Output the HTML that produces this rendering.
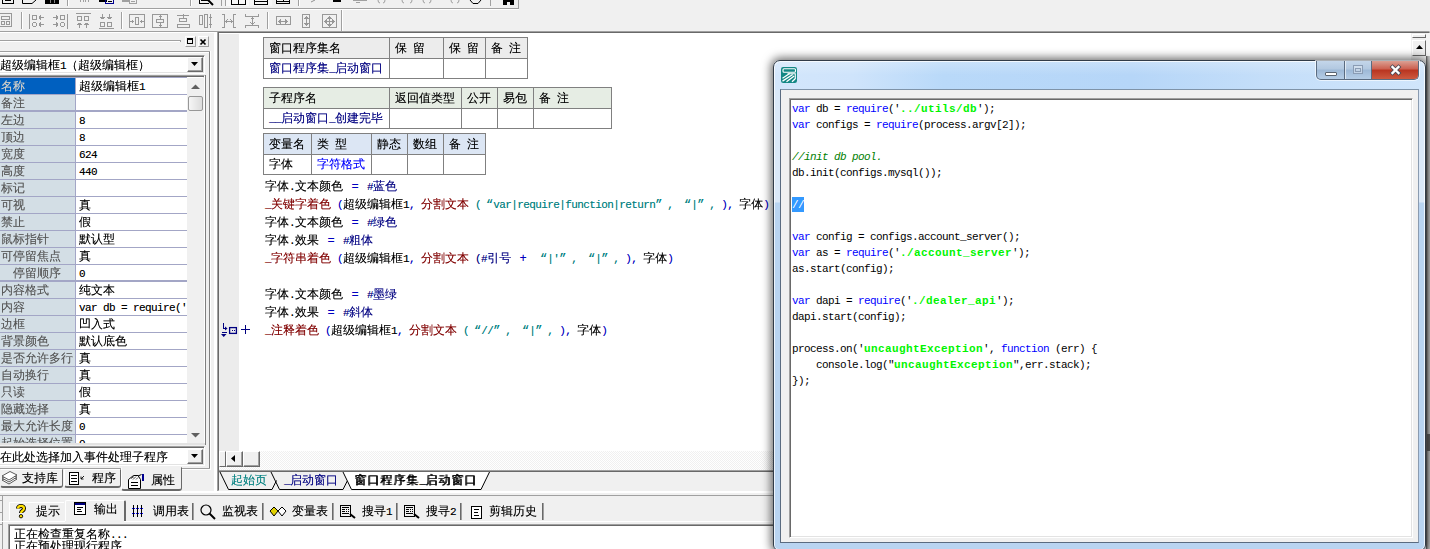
<!DOCTYPE html>
<html><head><meta charset="utf-8"><title>IDE</title><style>
html,body{margin:0;padding:0}
body{width:1430px;height:549px;overflow:hidden;background:#f0f0f0;position:relative;
 font-family:"Liberation Mono","WenQuanYi Zen Hei","Noto Sans CJK SC",sans-serif;font-size:12px;color:#000}
div{position:absolute;box-sizing:border-box}
.t{white-space:pre;line-height:12px;height:12px;margin-top:1px;margin-left:1px;text-shadow:0 0 0 color-mix(in srgb,currentColor 45%,transparent)}
.a{font-family:"Liberation Mono","WenQuanYi Zen Hei",monospace;font-size:11px;letter-spacing:-0.601px}
.ql{display:inline-block;width:12px;text-align:right}
.qr{display:inline-block;width:12px;text-align:left}
.fw{display:inline-block;width:12px;text-align:center}
.c{white-space:pre;line-height:16px;height:16px;font-family:"Liberation Mono","WenQuanYi Zen Hei",monospace;font-size:11px;letter-spacing:-0.601px}
.c b{letter-spacing:0.399px;color:#00f400}
.k{color:#0000ff}
.cm{color:#008000;font-style:italic}
svg{position:absolute;overflow:visible}
</style></head><body>
<div style="left:0px;top:8px;width:519px;height:1px;background:#a0a0a0"></div>
<div style="left:0px;top:9px;width:519px;height:1px;background:#fff"></div>
<div style="left:518px;top:0px;width:1px;height:9px;background:#a0a0a0"></div>
<div style="left:226px;top:0px;width:23px;height:6px;background:#f8f8f8"></div>
<div style="left:250px;top:0px;width:22px;height:6px;background:#f6f6f6"></div>
<svg style="left:0;top:0" width="520" height="8" viewBox="0 0 520 8" fill="none" stroke="#000" stroke-width="1" shape-rendering="crispEdges"><path d="M2.5 0V3.5H13.5V0M5 0.5H11"/><path d="M22.5 0V3.5H32L36 0" shape-rendering="auto"/><rect x="45" y="0" width="14" height="4" fill="#000" stroke="none"/><path d="M50.5 0V3M54.5 0V3" stroke="#808080"/><path d="M80.5 0V2M83.5 0V2M85.5 0V2M88.5 0V2" stroke="#a0a0a0"/><rect x="99" y="0" width="8" height="2" fill="#000" stroke="none"/><path d="M105.5 0V3.5H113.5V0" stroke="#000090"/><path d="M108 1.5H112"/><rect x="122" y="0" width="8" height="2" fill="#a0a0a0" stroke="none"/><path d="M129.500 0V3.500H136.500V0M131 1.500H135" stroke="#a0a0a0"/><path d="M199.500 0V3.500H209" stroke-width="1"/><path d="M201 0.500H208"/><path d="M208 0L213 5" stroke-width="2" shape-rendering="auto"/><path d="M231.500 0V4.500H245.500V0M238.500 0V4"/><path d="M254.500 0V4.500H267.500V0M255 1.500H267"/><path d="M276.500 0V3.500H289.500V0M277 1.500H289M283.500 0V1"/><path d="M311 2L315 0" stroke="#909090" shape-rendering="auto"/><rect x="333" y="0" width="8" height="2" fill="#000" stroke="none"/><path d="M353 0.500H367M356 2.500H360" stroke="#a0a0a0"/><path d="M378 0Q378 3 380 3M385 0Q385 3 383 3M402 0Q402 3 404 3M412 0Q412 3 410 3M423 0Q423 3 425 3M431 0Q431 3 429 3M451 0Q451 3 453 3M459 0Q459 3 457 3" stroke="#a0a0a0" shape-rendering="auto"/><path d="M470 0L473 3.500H478L481 0" shape-rendering="auto"/><rect x="503" y="0" width="4" height="5" fill="#000" stroke="none"/><rect x="510" y="0" width="4" height="5" fill="#000" stroke="none"/><rect x="506" y="0" width="5" height="2" fill="#000" stroke="none"/></svg>
<div style="left:67px;top:0px;width:1px;height:6px;background:#a0a0a0"></div>
<div style="left:68px;top:0px;width:1px;height:6px;background:#fff"></div>
<div style="left:190px;top:0px;width:1px;height:6px;background:#a0a0a0"></div>
<div style="left:191px;top:0px;width:1px;height:6px;background:#fff"></div>
<div style="left:298px;top:0px;width:1px;height:6px;background:#a0a0a0"></div>
<div style="left:299px;top:0px;width:1px;height:6px;background:#fff"></div>
<div style="left:221px;top:0px;width:1px;height:6px;background:#a0a0a0"></div>
<div style="left:225px;top:0px;width:1px;height:6px;background:#a0a0a0"></div>
<div style="left:490px;top:0px;width:1px;height:6px;background:#a0a0a0"></div>
<div style="left:21px;top:12px;width:1px;height:17px;background:#a0a0a0"></div>
<div style="left:22px;top:12px;width:1px;height:17px;background:#fff"></div>
<div style="left:121px;top:12px;width:1px;height:17px;background:#a0a0a0"></div>
<div style="left:122px;top:12px;width:1px;height:17px;background:#fff"></div>
<div style="left:267px;top:12px;width:1px;height:17px;background:#a0a0a0"></div>
<div style="left:268px;top:12px;width:1px;height:17px;background:#fff"></div>
<div style="left:341px;top:10px;width:1px;height:21px;background:#a0a0a0"></div>
<div style="left:342px;top:10px;width:1px;height:21px;background:#fff"></div>
<svg style="left:-4px;top:13px" width="16" height="16" viewBox="0 0 16 16" fill="none" stroke="#989898" stroke-width="1" shape-rendering="crispEdges"><rect x="0.5" y="0.5" width="15" height="13"/><rect x="5.5" y="3.5" width="8" height="3"/><rect x="5.5" y="8.5" width="3" height="3"/><rect x="10.5" y="8.5" width="3" height="3"/></svg>
<svg style="left:29px;top:13px" width="16" height="16" viewBox="0 0 16 16" fill="none" stroke="#989898" stroke-width="1" shape-rendering="crispEdges"><path d="M0.5 0.5V15.5"/><rect x="3.5" y="2.5" width="4" height="4"/><rect x="3.5" y="9.5" width="4" height="4" rx="2"/><path d="M10 4.5H15M10 4.5L12 2.5M10 4.5L12 6.5M10 11.5H15M10 11.5L12 9.5M10 11.5L12 13.5"/></svg>
<svg style="left:52px;top:13px" width="16" height="16" viewBox="0 0 16 16" fill="none" stroke="#989898" stroke-width="1" shape-rendering="crispEdges"><path d="M15.5 0.5V15.5"/><rect x="8.5" y="2.5" width="4" height="4"/><rect x="8.5" y="9.5" width="4" height="4" rx="2"/><path d="M1 4.5H6M6 4.5L4 2.5M6 4.5L4 6.5M1 11.5H6M6 11.5L4 9.5M6 11.5L4 13.5"/></svg>
<svg style="left:75px;top:13px" width="16" height="16" viewBox="0 0 16 16" fill="none" stroke="#989898" stroke-width="1" shape-rendering="crispEdges"><path d="M0.5 0.5H15.5"/><rect x="2.5" y="3.5" width="4" height="4"/><rect x="9.5" y="3.5" width="4" height="4"/><path d="M4.5 10V15M4.5 10L2.5 12M4.5 10L6.5 12M11.5 10V15M11.5 10L9.5 12M11.5 10L13.5 12"/></svg>
<svg style="left:98px;top:13px" width="16" height="16" viewBox="0 0 16 16" fill="none" stroke="#989898" stroke-width="1" shape-rendering="crispEdges"><path d="M0.5 15.5H15.5"/><rect x="2.5" y="9.5" width="4" height="4"/><rect x="9.5" y="9.5" width="4" height="4"/><path d="M4.5 1V6M4.5 6L2.5 4M4.5 6L6.5 4M11.5 1V6M11.5 6L9.5 4M11.5 6L13.5 4"/></svg>
<svg style="left:129px;top:13px" width="16" height="16" viewBox="0 0 16 16" fill="none" stroke="#989898" stroke-width="1" shape-rendering="crispEdges"><rect x="0.5" y="1.5" width="15" height="13"/><rect x="6.5" y="4.5" width="3" height="7"/><path d="M1 8.5H5M11 8.5H15M3.5 7V10M12.5 7V10"/></svg>
<svg style="left:152px;top:13px" width="16" height="16" viewBox="0 0 16 16" fill="none" stroke="#989898" stroke-width="1" shape-rendering="crispEdges"><rect x="0.5" y="1.5" width="15" height="13"/><rect x="4.5" y="6.5" width="7" height="3"/><path d="M8.5 2V6M8.5 10V14M7 3.5H10M7 12.5H10"/></svg>
<svg style="left:175px;top:13px" width="16" height="16" viewBox="0 0 16 16" fill="none" stroke="#989898" stroke-width="1" shape-rendering="crispEdges"><path d="M2 2.5H14M8.5 1V5"/><rect x="4.5" y="5.5" width="7" height="3"/><rect x="2.5" y="11.5" width="12" height="3"/></svg>
<svg style="left:198px;top:13px" width="16" height="16" viewBox="0 0 16 16" fill="none" stroke="#989898" stroke-width="1" shape-rendering="crispEdges"><rect x="1.5" y="2.5" width="3" height="9"/><rect x="6.5" y="1.5" width="3" height="13"/><path d="M12.5 1V15M11 4.5H14M11 11.5H14"/></svg>
<svg style="left:221px;top:13px" width="16" height="16" viewBox="0 0 16 16" fill="none" stroke="#989898" stroke-width="1" shape-rendering="crispEdges"><path d="M1 1.5H3.5V14.5H1M15 1.5H12.5V14.5H15M4 8.5H12M6.5 6.5L4.5 8.5L6.5 10.5M9.5 6.5L11.5 8.5L9.5 10.5"/></svg>
<svg style="left:244px;top:13px" width="16" height="16" viewBox="0 0 16 16" fill="none" stroke="#989898" stroke-width="1" shape-rendering="crispEdges"><path d="M1.5 1V3.5H14.5V1M1.5 15V12.5H14.5V15M8.5 4V12M6.5 6.5L8.5 4.5L10.5 6.5M6.5 9.5L8.5 11.5L10.5 9.5"/></svg>
<svg style="left:275px;top:13px" width="16" height="16" viewBox="0 0 16 16" fill="none" stroke="#989898" stroke-width="1" shape-rendering="crispEdges"><rect x="1.5" y="3.5" width="14" height="8"/><path d="M4 8.5H12M6 6.5L4 8.5L6 10.5M10 6.5L12 8.5L10 10.5"/></svg>
<svg style="left:298px;top:13px" width="16" height="16" viewBox="0 0 16 16" fill="none" stroke="#989898" stroke-width="1" shape-rendering="crispEdges"><rect x="4.5" y="1.5" width="7" height="13"/><path d="M8.5 4V12M6.5 6L8.5 4L10.5 6M6.5 10L8.5 12L10.5 10"/></svg>
<svg style="left:321px;top:13px" width="16" height="16" viewBox="0 0 16 16" fill="none" stroke="#989898" stroke-width="1" shape-rendering="crispEdges"><rect x="1.5" y="1.5" width="14" height="13"/><path d="M4 8.5H13M8.5 4V13M6 6.5L4 8.5L6 10.5M11 6.5L13 8.5L11 10.5M6.5 6L8.5 4L10.5 6M6.5 11L8.5 13L10.5 11"/></svg>
<div style="left:0px;top:31px;width:1430px;height:1px;background:#a0a0a0"></div>
<div style="left:0px;top:32px;width:218px;height:1px;background:#fff"></div>
<div style="left:0px;top:40px;width:180px;height:1px;background:#a0a0a0"></div>
<div style="left:0px;top:41px;width:181px;height:1px;background:#fff"></div>
<div style="left:180px;top:40px;width:1px;height:2px;background:#a0a0a0"></div>
<div style="left:185px;top:36px;width:11px;height:11px;background:#f0f0f0;border:1px solid;border-color:#fff #a0a0a0 #a0a0a0 #fff"></div>
<div style="left:187px;top:38px;width:6px;height:6px;border:1px solid #000;border-top-width:2px"></div>
<div style="left:198px;top:36px;width:11px;height:11px;background:#f0f0f0;border:1px solid;border-color:#fff #a0a0a0 #a0a0a0 #fff"></div>
<svg style="left:200px;top:39px" width="6" height="6" viewBox="0 0 6 6" stroke="#000" stroke-width="1.7"><path d="M0.5 0.5L5.5 5.5M5.5 0.5L0.5 5.5"/></svg>
<div style="left:209px;top:51px;width:1px;height:418px;background:#808080"></div>
<div style="left:210px;top:51px;width:1px;height:419px;background:#fff"></div>
<div style="left:0px;top:51px;width:210px;height:1px;background:#a0a0a0"></div>
<div style="left:0px;top:52px;width:209px;height:1px;background:#fff"></div>
<div style="left:214px;top:33px;width:3px;height:458px;background:#fff"></div>
<div style="left:-2px;top:55px;width:207px;height:19px;background:#fff;border:1px solid;border-color:#a0a0a0 #fff #fff #a0a0a0;box-shadow:inset 1px 1px 0 #696969,inset -1px -1px 0 #e3e3e3"></div>
<div class="t" style="left:-1px;top:59px;">超级编辑框<span class="a">1</span>（超级编辑框）</div>
<div style="left:187px;top:57px;width:16px;height:15px;background:#f0f0f0;border:1px solid;border-color:#fff #696969 #696969 #fff;box-shadow:inset -1px -1px 0 #a0a0a0"></div>
<svg style="left:191px;top:62px" width="8" height="4" viewBox="0 0 8 4"><path d="M0 0H7L3.5 4Z" fill="#000"/></svg>
<div style="left:-2px;top:75px;width:207px;height:370px;background:#fff;border:1px solid;border-color:#a0a0a0 #fff #fff #a0a0a0;box-shadow:inset 1px 1px 0 #696969,inset -1px -1px 0 #e3e3e3"></div>
<div style="left:0px;top:77px;width:187px;height:1px;background:#a3a6c6"></div>
<div style="left:0px;top:78px;width:75px;height:365px;background:#d3dee5"></div>
<div style="left:0px;top:78px;width:75px;height:16px;background:#0060c0"></div>
<div style="left:75px;top:78px;width:1px;height:365px;background:#a3a6c6"></div>
<div class="t" style="left:0px;top:80px;color:#d4d0c8">名称</div>
<div class="t" style="left:78px;top:80px;">超级编辑框<span class="a">1</span></div>
<div style="left:0px;top:94px;width:187px;height:1px;background:#a3a6c6"></div>
<div class="t" style="left:0px;top:97px;color:#565656">备注</div>
<div style="left:0px;top:111px;width:187px;height:1px;background:#a3a6c6"></div>
<div class="t" style="left:0px;top:114px;color:#565656">左边</div>
<div class="t" style="left:78px;top:114px;"><span class="a">8</span></div>
<div style="left:0px;top:128px;width:187px;height:1px;background:#a3a6c6"></div>
<div class="t" style="left:0px;top:131px;color:#565656">顶边</div>
<div class="t" style="left:78px;top:131px;"><span class="a">8</span></div>
<div style="left:0px;top:145px;width:187px;height:1px;background:#a3a6c6"></div>
<div class="t" style="left:0px;top:148px;color:#565656">宽度</div>
<div class="t" style="left:78px;top:148px;"><span class="a">624</span></div>
<div style="left:0px;top:162px;width:187px;height:1px;background:#a3a6c6"></div>
<div class="t" style="left:0px;top:165px;color:#565656">高度</div>
<div class="t" style="left:78px;top:165px;"><span class="a">440</span></div>
<div style="left:0px;top:179px;width:187px;height:1px;background:#a3a6c6"></div>
<div class="t" style="left:0px;top:182px;color:#565656">标记</div>
<div style="left:0px;top:196px;width:187px;height:1px;background:#a3a6c6"></div>
<div class="t" style="left:0px;top:199px;color:#565656">可视</div>
<div class="t" style="left:78px;top:199px;">真</div>
<div style="left:0px;top:213px;width:187px;height:1px;background:#a3a6c6"></div>
<div class="t" style="left:0px;top:216px;color:#565656">禁止</div>
<div class="t" style="left:78px;top:216px;">假</div>
<div style="left:0px;top:230px;width:187px;height:1px;background:#a3a6c6"></div>
<div class="t" style="left:0px;top:233px;color:#565656">鼠标指针</div>
<div class="t" style="left:78px;top:233px;">默认型</div>
<div style="left:0px;top:247px;width:187px;height:1px;background:#a3a6c6"></div>
<div class="t" style="left:0px;top:250px;color:#565656">可停留焦点</div>
<div class="t" style="left:78px;top:250px;">真</div>
<div style="left:0px;top:264px;width:187px;height:1px;background:#a3a6c6"></div>
<div class="t" style="left:12px;top:267px;color:#565656">停留顺序</div>
<div class="t" style="left:78px;top:267px;"><span class="a">0</span></div>
<div style="left:0px;top:281px;width:187px;height:1px;background:#a3a6c6"></div>
<div class="t" style="left:0px;top:284px;color:#565656">内容格式</div>
<div class="t" style="left:78px;top:284px;">纯文本</div>
<div style="left:0px;top:298px;width:187px;height:1px;background:#a3a6c6"></div>
<div class="t" style="left:0px;top:301px;color:#565656">内容</div>
<div class="t" style="left:78px;top:301px;"><span class="a">var db = require('</span></div>
<div style="left:0px;top:315px;width:187px;height:1px;background:#a3a6c6"></div>
<div class="t" style="left:0px;top:318px;color:#565656">边框</div>
<div class="t" style="left:78px;top:318px;">凹入式</div>
<div style="left:0px;top:332px;width:187px;height:1px;background:#a3a6c6"></div>
<div class="t" style="left:0px;top:335px;color:#565656">背景颜色</div>
<div class="t" style="left:78px;top:335px;">默认底色</div>
<div style="left:0px;top:349px;width:187px;height:1px;background:#a3a6c6"></div>
<div class="t" style="left:0px;top:352px;color:#565656">是否允许多行</div>
<div class="t" style="left:78px;top:352px;">真</div>
<div style="left:0px;top:366px;width:187px;height:1px;background:#a3a6c6"></div>
<div class="t" style="left:0px;top:369px;color:#565656">自动换行</div>
<div class="t" style="left:78px;top:369px;">真</div>
<div style="left:0px;top:383px;width:187px;height:1px;background:#a3a6c6"></div>
<div class="t" style="left:0px;top:386px;color:#565656">只读</div>
<div class="t" style="left:78px;top:386px;">假</div>
<div style="left:0px;top:400px;width:187px;height:1px;background:#a3a6c6"></div>
<div class="t" style="left:0px;top:403px;color:#565656">隐藏选择</div>
<div class="t" style="left:78px;top:403px;">真</div>
<div style="left:0px;top:417px;width:187px;height:1px;background:#a3a6c6"></div>
<div class="t" style="left:0px;top:420px;color:#565656">最大允许长度</div>
<div class="t" style="left:78px;top:420px;"><span class="a">0</span></div>
<div style="left:0px;top:434px;width:187px;height:1px;background:#a3a6c6"></div>
<div class="t" style="left:0px;top:437px;color:#565656">起始选择位置</div>
<div class="t" style="left:78px;top:437px;"><span class="a">0</span></div>
<div style="left:0px;top:110px;width:187px;height:2px;background:#a3a6c6"></div>
<div style="left:0px;top:280px;width:187px;height:2px;background:#a3a6c6"></div>
<div style="left:205px;top:75px;width:1px;height:370px;background:#808080"></div>
<div style="left:187px;top:78px;width:17px;height:365px;background:#f0f0f0"></div>
<svg style="left:191px;top:84px" width="9" height="5" viewBox="0 0 9 5"><path d="M0 5L4.5 0.5L9 5" fill="#606060"/></svg>
<svg style="left:191px;top:433px" width="9" height="5" viewBox="0 0 9 5"><path d="M0 0L4.5 4.5L9 0" fill="#606060"/></svg>
<div style="left:188px;top:96px;width:15px;height:15px;background:linear-gradient(90deg,#f6f6f6,#dcdcdc);border:1px solid #979797;border-radius:2px"></div>
<div style="left:0px;top:443px;width:205px;height:2px;background:#e3e3e3"></div>
<div style="left:0px;top:445px;width:209px;height:2px;background:#f0f0f0"></div>
<div style="left:-2px;top:446px;width:207px;height:20px;background:#fff;border:1px solid;border-color:#a0a0a0 #fff #fff #a0a0a0;box-shadow:inset 1px 1px 0 #696969,inset -1px -1px 0 #e3e3e3"></div>
<div class="t" style="left:-1px;top:451px;">在此处选择加入事件处理子程序</div>
<div style="left:187px;top:449px;width:16px;height:15px;background:#f0f0f0;border:1px solid;border-color:#fff #696969 #696969 #fff;box-shadow:inset -1px -1px 0 #a0a0a0"></div>
<svg style="left:191px;top:454px" width="8" height="4" viewBox="0 0 8 4"><path d="M0 0H7L3.5 4Z" fill="#000"/></svg>
<div style="left:181px;top:468px;width:29px;height:1px;background:#a0a0a0"></div>
<div style="left:181px;top:469px;width:30px;height:1px;background:#fff"></div>
<div style="left:0px;top:468px;width:121px;height:1px;background:#a0a0a0"></div>
<div style="left:0px;top:469px;width:63px;height:19px;border:1px solid;border-color:#fff #696969 #696969 #f0f0f0;border-bottom-width:2px;border-radius:0 0 3px 3px"></div>
<div style="left:64px;top:469px;width:57px;height:19px;border:1px solid;border-color:#fff #696969 #696969 #fff;border-bottom-width:2px;border-radius:0 0 3px 3px"></div>
<div style="left:121px;top:467px;width:61px;height:24px;background:#f0f0f0;border:1px solid;border-color:#f0f0f0 #696969 #696969 #fff;border-bottom-width:2px;border-radius:0 0 3px 3px"></div>
<div class="t" style="left:21px;top:472px;">支持库</div>
<div class="t" style="left:91px;top:472px;">程序</div>
<div class="t" style="left:150px;top:474px;">属性</div>
<svg style="left:1px;top:471px" width="17" height="15" viewBox="0 0 17 15" fill="#fff" stroke="#303030" stroke-width="0.8"><path d="M1 9L9 4.5L16 8L8 13Z"/><path d="M1 7L9 2.5L16 6L8 11Z"/><path d="M1 5L9 0.5L16 4L8 9Z"/></svg>
<svg style="left:69px;top:472px" width="18" height="14" viewBox="0 0 18 14" fill="#fff" stroke="#000" stroke-width="1" shape-rendering="crispEdges"><rect x="0.5" y="0.5" width="9" height="12"/><path d="M2 3.5H8M2 6.500H8M2 9.500H8"/><path d="M12 7L15 4M12 7V4.500M12 7H14.500" shape-rendering="auto" stroke-width="0.9"/></svg>
<svg style="left:128px;top:473px" width="18" height="17" viewBox="0 0 18 17" fill="#fff" stroke="#000" stroke-width="1"><path d="M0.500 15.500V6.500L5.500 2.500H10L12.500 6.500V15.500Z"/><path d="M3 5.500L6 3.500M5 6.500L8 3.500M8 6.500L10 4.500" stroke-width="0.7"/><path d="M3 9.500H10M3 12.500H10" shape-rendering="crispEdges"/><path d="M10 3L13.500 1.500" fill="none"/><path d="M14.500 1V8" stroke="#000090" stroke-width="2" shape-rendering="crispEdges"/></svg>
<div style="left:217px;top:31px;width:1213px;height:461px;background:#f0f0f0;border:1px solid;border-color:#a0a0a0 #e3e3e3 #fff #a0a0a0"></div>
<div style="left:218px;top:32px;width:1212px;height:459px;border:1px solid;border-color:#696969 #e3e3e3 #f0f0f0 #696969"></div>
<div style="left:219px;top:33px;width:1192px;height:418px;background:#fff"></div>
<div style="left:219px;top:34px;width:20px;height:417px;background:#ececec"></div>
<div style="left:1411px;top:34px;width:15px;height:436px;background:#f0f0f0"></div>
<div style="left:1412px;top:34px;width:14px;height:4px;background:#f0f0f0;border:1px solid;border-color:#fff #696969 #696969 #fff"></div>
<div style="left:1412px;top:40px;width:14px;height:16px;background:#f0f0f0;border:1px solid;border-color:#fff #696969 #696969 #fff"></div>
<svg style="left:1416px;top:45px" width="8" height="4" viewBox="0 0 8 4"><path d="M0 4H7L3.5 0Z" fill="#000"/></svg>
<div style="left:219px;top:451px;width:1192px;height:19px;background:repeating-conic-gradient(#fff 0 25%,#f0f0f0 0 50%) 0 0/2px 2px"></div>
<div style="left:219px;top:451px;width:7px;height:16px;background:#f0f0f0;border:1px solid;border-color:#fff #696969 #696969 #fff"></div>
<div style="left:226px;top:451px;width:17px;height:16px;background:#f0f0f0;border:1px solid;border-color:#fff #696969 #696969 #fff;box-shadow:inset -1px -1px 0 #a0a0a0"></div>
<svg style="left:231px;top:455px" width="4" height="8" viewBox="0 0 4 8"><path d="M4 0V7L0 3.5Z" fill="#000"/></svg>
<div style="left:243px;top:451px;width:17px;height:16px;background:#f0f0f0;border:1px solid;border-color:#fff #696969 #696969 #fff;box-shadow:inset -1px -1px 0 #a0a0a0"></div>
<div style="left:219px;top:470px;width:1211px;height:1px;background:#a0a0a0"></div>
<div style="left:219px;top:471px;width:1211px;height:1px;background:#696969"></div>
<div style="left:263px;top:37px;width:265px;height:42px;background:#fff;border:1px solid #808080"></div>
<div style="left:264px;top:38px;width:263px;height:20px;background:#ececec"></div>
<div style="left:263px;top:58px;width:265px;height:1px;background:#808080"></div>
<div class="t" style="left:268px;top:42px;">窗口程序集名</div>
<div class="t" style="left:268px;top:62px;color:#000080">窗口程序集<span class="a">_</span>启动窗口</div>
<div style="left:389px;top:37px;width:1px;height:42px;background:#808080"></div>
<div class="t" style="left:394px;top:42px;">保<span class="a"> </span>留</div>
<div style="left:443px;top:37px;width:1px;height:42px;background:#808080"></div>
<div class="t" style="left:448px;top:42px;">保<span class="a"> </span>留</div>
<div style="left:485px;top:37px;width:1px;height:42px;background:#808080"></div>
<div class="t" style="left:490px;top:42px;">备<span class="a"> </span>注</div>
<div style="left:263px;top:87px;width:349px;height:42px;background:#fff;border:1px solid #808080"></div>
<div style="left:264px;top:88px;width:347px;height:20px;background:#e6ede4"></div>
<div style="left:263px;top:108px;width:349px;height:1px;background:#808080"></div>
<div class="t" style="left:268px;top:92px;">子程序名</div>
<div class="t" style="left:268px;top:112px;color:#000080"><span class="a">__</span>启动窗口<span class="a">_</span>创建完毕</div>
<div style="left:389px;top:87px;width:1px;height:42px;background:#808080"></div>
<div class="t" style="left:394px;top:92px;">返回值类型</div>
<div style="left:461px;top:87px;width:1px;height:42px;background:#808080"></div>
<div class="t" style="left:466px;top:92px;">公开</div>
<div style="left:497px;top:87px;width:1px;height:42px;background:#808080"></div>
<div class="t" style="left:502px;top:92px;">易包</div>
<div style="left:533px;top:87px;width:1px;height:42px;background:#808080"></div>
<div class="t" style="left:538px;top:92px;">备<span class="a"> </span>注</div>
<div style="left:263px;top:133px;width:223px;height:42px;background:#fff;border:1px solid #808080"></div>
<div style="left:264px;top:134px;width:221px;height:20px;background:#dce6f4"></div>
<div style="left:263px;top:154px;width:223px;height:1px;background:#808080"></div>
<div class="t" style="left:268px;top:138px;">变量名</div>
<div class="t" style="left:268px;top:158px;color:#000">字体</div>
<div style="left:311px;top:133px;width:1px;height:42px;background:#808080"></div>
<div class="t" style="left:316px;top:138px;">类<span class="a"> </span>型</div>
<div class="t" style="left:316px;top:158px;color:#0000ff">字符格式</div>
<div style="left:371px;top:133px;width:1px;height:42px;background:#808080"></div>
<div class="t" style="left:376px;top:138px;">静态</div>
<div style="left:407px;top:133px;width:1px;height:42px;background:#808080"></div>
<div class="t" style="left:412px;top:138px;">数组</div>
<div style="left:443px;top:133px;width:1px;height:42px;background:#808080"></div>
<div class="t" style="left:448px;top:138px;">备<span class="a"> </span>注</div>
<div class="t" style="left:264px;top:180px;"><span style="color:#000">字体<span class="a">.</span>文本颜色<span class="a"> </span></span><span style="color:#0000c0"><span class="fw">=</span></span><span style="color:#000"><span class="a"> </span></span><span style="color:#000080"><span class="a">#</span>蓝色</span></div>
<div class="t" style="left:264px;top:198px;"><span style="color:#800000"><span class="a">_</span>关键字着色</span><span style="color:#000"><span class="a"> </span></span><span style="color:#0000c0"><span class="a">(</span></span><span style="color:#000">超级编辑框<span class="a">1</span></span><span style="color:#0000c0"><span class="a">,</span></span><span style="color:#000"><span class="a"> </span></span><span style="color:#800000">分割文本</span><span style="color:#000"><span class="a"> </span></span><span style="color:#008080"><span class="a">(</span><span class="ql">“</span><span class="a">var|require|function|return</span><span class="qr">”</span><span class="a">, </span><span class="ql">“</span><span class="a">|</span><span class="qr">”</span><span class="a">, </span></span><span style="color:#0000c0"><span class="a">), </span></span><span style="color:#000">字体</span><span style="color:#0000c0"><span class="a">)</span></span></div>
<div class="t" style="left:264px;top:216px;"><span style="color:#000">字体<span class="a">.</span>文本颜色<span class="a"> </span></span><span style="color:#0000c0"><span class="fw">=</span></span><span style="color:#000"><span class="a"> </span></span><span style="color:#000080"><span class="a">#</span>绿色</span></div>
<div class="t" style="left:264px;top:234px;"><span style="color:#000">字体<span class="a">.</span>效果<span class="a"> </span></span><span style="color:#0000c0"><span class="fw">=</span></span><span style="color:#000"><span class="a"> </span></span><span style="color:#000080"><span class="a">#</span>粗体</span></div>
<div class="t" style="left:264px;top:252px;"><span style="color:#800000"><span class="a">_</span>字符串着色</span><span style="color:#000"><span class="a"> </span></span><span style="color:#0000c0"><span class="a">(</span></span><span style="color:#000">超级编辑框<span class="a">1</span></span><span style="color:#0000c0"><span class="a">,</span></span><span style="color:#000"><span class="a"> </span></span><span style="color:#800000">分割文本</span><span style="color:#000"><span class="a"> </span></span><span style="color:#000080"><span class="a">(#</span>引号<span class="a"> </span></span><span style="color:#0000c0"><span class="fw">+</span></span><span style="color:#000"><span class="a"> </span></span><span style="color:#008080"><span class="ql">“</span><span class="a">|'</span><span class="qr">”</span><span class="a">, </span><span class="ql">“</span><span class="a">|</span><span class="qr">”</span><span class="a">, </span></span><span style="color:#0000c0"><span class="a">), </span></span><span style="color:#000">字体</span><span style="color:#0000c0"><span class="a">)</span></span></div>
<div class="t" style="left:264px;top:288px;"><span style="color:#000">字体<span class="a">.</span>文本颜色<span class="a"> </span></span><span style="color:#0000c0"><span class="fw">=</span></span><span style="color:#000"><span class="a"> </span></span><span style="color:#000080"><span class="a">#</span>墨绿</span></div>
<div class="t" style="left:264px;top:306px;"><span style="color:#000">字体<span class="a">.</span>效果<span class="a"> </span></span><span style="color:#0000c0"><span class="fw">=</span></span><span style="color:#000"><span class="a"> </span></span><span style="color:#000080"><span class="a">#</span>斜体</span></div>
<div class="t" style="left:264px;top:324px;"><span style="color:#800000"><span class="a">_</span>注释着色</span><span style="color:#000"><span class="a"> </span></span><span style="color:#0000c0"><span class="a">(</span></span><span style="color:#000">超级编辑框<span class="a">1</span></span><span style="color:#0000c0"><span class="a">,</span></span><span style="color:#000"><span class="a"> </span></span><span style="color:#800000">分割文本</span><span style="color:#000"><span class="a"> </span></span><span style="color:#008080"><span class="a">(</span><span class="ql">“</span><span class="a">//</span><span class="qr">”</span><span class="a">, </span><span class="ql">“</span><span class="a">|</span><span class="qr">”</span><span class="a">, </span></span><span style="color:#0000c0"><span class="a">), </span></span><span style="color:#000">字体</span><span style="color:#0000c0"><span class="a">)</span></span></div>
<svg style="left:221px;top:323px" width="30" height="14" viewBox="0 0 30 14" fill="none" stroke="#000080" stroke-width="1" shape-rendering="crispEdges"><path d="M2.500 0V6M2 5.500H5M1 9.500H6"/><path d="M4 3.500L6.500 5.500L4 7.500Z M0 11H5.500L2.750 14Z" fill="#000080" stroke="none" shape-rendering="auto"/><rect x="8.600" y="4.600" width="6.800" height="5.800" stroke-width="1.300" shape-rendering="auto"/><path d="M11 7.500H12M13 7.500H14"/><path d="M20 6.500H29M24.500 2V11"/></svg>
<svg style="left:219px;top:472px" width="280" height="18" viewBox="0 0 280 18" fill="none" stroke="#000" stroke-width="1"><path d="M1 0L9.500 17.500H53L57.500 8.500" /><path d="M52 0L60.500 17.500H124L128.500 8.500"/><path d="M124 0L132.500 17.500H262L270.500 0" fill="#fff"/></svg>
<div class="t" style="left:230px;top:474px;color:#008080">起始页</div>
<div class="t" style="left:283px;top:474px;color:#000080"><span class="a">_</span>启动窗口</div>
<div class="t bt" style="left:353px;top:474px;letter-spacing:1px;text-shadow:1px 0 0 #000">窗口程序集<span class="a">_</span>启动窗口</div>
<div style="left:0px;top:491px;width:1430px;height:2px;background:#fff"></div>
<div style="left:0px;top:495px;width:1430px;height:1px;background:#a0a0a0"></div>
<div style="left:0px;top:496px;width:3px;height:53px;background:#f0f0f0;border-right:1px solid #a0a0a0"></div>
<div style="left:0px;top:500px;width:3px;height:1px;background:#a0a0a0"></div>
<div style="left:0px;top:512px;width:3px;height:1px;background:#a0a0a0"></div>
<div style="left:0px;top:524px;width:3px;height:1px;background:#a0a0a0"></div>
<div class="t" style="left:35px;top:505px;">提示</div>
<div style="left:65px;top:500px;width:61px;height:22px;background:#f0f0f0;border:1px solid;border-color:#fff #696969 #f0f0f0 #fff;border-right-width:2px;border-radius:2px 2px 0 0"></div>
<div class="t" style="left:93px;top:503px;">输出</div>
<div style="left:192px;top:503px;width:1px;height:17px;background:#696969"></div>
<div style="left:193px;top:503px;width:1px;height:17px;background:#a0a0a0"></div>
<div class="t" style="left:152px;top:505px;">调用表</div>
<div style="left:262px;top:503px;width:1px;height:17px;background:#696969"></div>
<div style="left:263px;top:503px;width:1px;height:17px;background:#a0a0a0"></div>
<div class="t" style="left:221px;top:505px;">监视表</div>
<div style="left:332px;top:503px;width:1px;height:17px;background:#696969"></div>
<div style="left:333px;top:503px;width:1px;height:17px;background:#a0a0a0"></div>
<div class="t" style="left:291px;top:505px;">变量表</div>
<div style="left:396px;top:503px;width:1px;height:17px;background:#696969"></div>
<div style="left:397px;top:503px;width:1px;height:17px;background:#a0a0a0"></div>
<div class="t" style="left:361px;top:505px;">搜寻<span class="a">1</span></div>
<div style="left:460px;top:503px;width:1px;height:17px;background:#696969"></div>
<div style="left:461px;top:503px;width:1px;height:17px;background:#a0a0a0"></div>
<div class="t" style="left:425px;top:505px;">搜寻<span class="a">2</span></div>
<div style="left:542px;top:503px;width:1px;height:17px;background:#696969"></div>
<div style="left:543px;top:503px;width:1px;height:17px;background:#a0a0a0"></div>
<div class="t" style="left:488px;top:505px;">剪辑历史</div>
<div style="left:9px;top:502px;width:55px;height:1px;background:#fff"></div>
<div style="left:9px;top:502px;width:1px;height:18px;background:#fff"></div>
<div style="left:0px;top:521px;width:1430px;height:1px;background:#fff"></div>
<div style="left:65px;top:521px;width:59px;height:1px;background:#f0f0f0"></div>
<svg style="left:16px;top:504px" width="10" height="14" viewBox="0 0 10 14"><path d="M2 4.5C2 1 8 1 8 4.5C8 7 5 6.5 5 9" fill="none" stroke="#000" stroke-width="4"/><path d="M2 4.5C2 1 8 1 8 4.5C8 7 5 6.5 5 9" fill="none" stroke="#ffe000" stroke-width="2.2"/><circle cx="5" cy="12.2" r="1.7" fill="#ffe000" stroke="#000" stroke-width="0.9"/></svg>
<svg style="left:74px;top:502px" width="12" height="13" viewBox="0 0 12 13" shape-rendering="crispEdges"><rect x="0.5" y="0.5" width="11" height="12" fill="#fff" stroke="#000"/><rect x="1" y="1" width="10" height="2" fill="#000080"/><path d="M3 5.5H9M3 7.5H7M3 9.5H8" stroke="#000"/></svg>
<svg style="left:132px;top:505px" width="12" height="13" viewBox="0 0 12 13" shape-rendering="crispEdges" stroke="#000"><path d="M1.5 0V12M5.5 0V12M9.5 0V12"/><path d="M0 3.5H11M0 8.5H11" stroke="#0000ff" stroke-dasharray="1 1"/></svg>
<svg style="left:200px;top:504px" width="16" height="16" viewBox="0 0 16 16" fill="none" stroke="#000"><circle cx="6" cy="6" r="5" stroke-width="1.2"/><path d="M9.5 9.5L15 15" stroke-width="2"/></svg>
<svg style="left:269px;top:506px" width="18" height="11" viewBox="0 0 18 11" stroke="#000" stroke-width="1"><path d="M1 5L5 1L9 5L5 10Z" fill="#e0d000"/><path d="M9 5L13 1L17 5L13 10Z" fill="#fff"/><path d="M5 1L9 5" /></svg>
<svg style="left:340px;top:505px" width="16" height="14" viewBox="0 0 16 14" shape-rendering="crispEdges" fill="none" stroke="#000"><rect x="0.5" y="0.5" width="10" height="11"/><path d="M2 2.500H9M2 4.500H5M2 6.500H5M2 8.500H9"/><path d="M6 4.500H9M6 6.500H9" stroke-dasharray="1 1"/><path d="M10 9L15 13" stroke-width="2" shape-rendering="auto"/></svg>
<svg style="left:404px;top:505px" width="16" height="14" viewBox="0 0 16 14" shape-rendering="crispEdges" fill="none" stroke="#000"><rect x="0.5" y="0.5" width="10" height="11"/><path d="M2 2.500H9M2 4.500H5M2 6.500H5M2 8.500H9"/><path d="M6 4.500H9M6 6.500H9" stroke-dasharray="1 1"/><path d="M10 9L15 13" stroke-width="2" shape-rendering="auto"/></svg>
<svg style="left:471px;top:506px" width="12" height="13" viewBox="0 0 12 13" shape-rendering="crispEdges" fill="#fff" stroke="#000"><rect x="0.5" y="0.5" width="10" height="12"/><path d="M3 3.5H8M3 6.5H7M3 9.5H8"/></svg>
<div style="left:8px;top:524px;width:1425px;height:30px;background:#fff;border:1px solid;border-color:#a0a0a0 #fff #fff #a0a0a0;box-shadow:inset 1px 1px 0 #696969,inset -1px -1px 0 #e3e3e3"></div>
<div class="t" style="left:13px;top:528px;">正在检查重复名称<span class="a">...</span></div>
<div class="t" style="left:13px;top:540px;">正在预处理现行程序</div>
<div style="left:1426px;top:33px;width:4px;height:26px;background:#f4f4f4"></div>
<div style="left:1426px;top:56px;width:4px;height:493px;background:linear-gradient(90deg,#4a4a4a 0,#8c8c8c 25%,#b4b4b4 60%,#c8c8c8 100%)"></div>
<div style="left:1427px;top:434px;width:3px;height:17px;background:#606060"></div>
<div style="left:773px;top:60px;width:653px;height:491px;background:linear-gradient(180deg,rgba(255,255,255,.25) 0,rgba(255,255,255,0) 14px,rgba(255,255,255,0) 29px,#dbe8f7 29px,#dbe8f7 141px,#b9d4f1 142px,#b9d4f1 100%),linear-gradient(90deg,#d3e6fb 0,#cfe4fb 12%,#b9d9f9 26%,#b6d6f8 55%,#c4def9 75%,#d0e5fb 100%);border:1px solid #323c48;border-radius:7px 7px 6px 6px;box-shadow:0 0 10px 2px rgba(0,0,0,.6), inset 0 0 0 1px rgba(255,255,255,.75)"></div>
<div style="left:780px;top:89px;width:639px;height:454px;background:#f0f0f0;border:1px solid;border-color:#7f93a8 #8a9bb0 #5a6b80 #5a6b80"></div>
<div style="left:789px;top:98px;width:624px;height:440px;background:#fff;border:1px solid;border-color:#a0a0a0 #fff #fff #a0a0a0;box-shadow:inset 1px 1px 0 #696969,inset -1px -1px 0 #e3e3e3"></div>
<svg style="left:781px;top:67px" width="16" height="16" viewBox="0 0 16 16"><rect x="0" y="0" width="16" height="16" rx="2.2" fill="#138784"/><rect x="2" y="1.700" width="12.500" height="3.600" rx="1" fill="none" stroke="#fff" stroke-width="1.100"/><path d="M6.500 6.700H14.300V12" fill="none" stroke="#fff" stroke-width="1.100"/><path d="M8.700 6.500L1.500 11.200M11.700 7.500L1.500 14.100M13.200 9L5.500 14.700M14.200 11.700L11 14.700" fill="none" stroke="#fff" stroke-width="1.300"/></svg>
<div style="left:1316px;top:61px;width:103px;height:19px;border:1px solid #5a6b80;border-top:none;border-radius:0 0 5px 5px;background:linear-gradient(180deg,#c4d6ea 0,#b2c8e0 45%,#9db8d6 50%,#b5cde6 100%);box-shadow:0 0 0 1px rgba(255,255,255,.6)"></div>
<div style="left:1344px;top:61px;width:1px;height:18px;background:#5a6b80"></div>
<div style="left:1345px;top:61px;width:1px;height:18px;background:rgba(255,255,255,.6)"></div>
<div style="left:1371px;top:61px;width:47px;height:18px;border-left:1px solid #5a6b80;border-radius:0 0 4px 0;background:linear-gradient(180deg,#dba093 0,#cc5f4f 45%,#b93420 50%,#cd5a40 100%)"></div>
<div style="left:1325px;top:72px;width:12px;height:4px;background:#fff;border:1px solid #5a6470;border-radius:1px"></div>
<div style="left:1353px;top:65px;width:10px;height:9px;border:1px solid #8a9cb4;background:rgba(255,255,255,.35)"></div>
<div style="left:1355px;top:68px;width:6px;height:4px;border:1px solid #8a9cb4"></div>
<svg style="left:1390px;top:65px" width="11" height="10" viewBox="0 0 11 10"><path d="M2.5 2L8.5 8M8.5 2L2.5 8" stroke="#4a4a55" stroke-width="4" stroke-linecap="square"/><path d="M2.5 2L8.5 8M8.5 2L2.5 8" stroke="#fff" stroke-width="2.4" stroke-linecap="square"/></svg>
<div style="left:792px;top:197px;width:12px;height:15px;background:#3399ff"></div>
<div class="c" style="left:792px;top:101px;"><span class=k>var</span> db = <span class=k>require</span>('<b>../utils/db</b>');</div>
<div class="c" style="left:792px;top:117px;"><span class=k>var</span> configs = <span class=k>require</span>(process.argv[2]);</div>
<div class="c" style="left:792px;top:149px;"><span class=cm>//init db pool.</span></div>
<div class="c" style="left:792px;top:165px;">db.init(configs.mysql());</div>
<div class="c" style="left:792px;top:197px;"><span style='color:#fff'>//</span></div>
<div class="c" style="left:792px;top:229px;"><span class=k>var</span> config = configs.account_server();</div>
<div class="c" style="left:792px;top:245px;"><span class=k>var</span> as = <span class=k>require</span>('<b>./account_server</b>');</div>
<div class="c" style="left:792px;top:261px;">as.start(config);</div>
<div class="c" style="left:792px;top:293px;"><span class=k>var</span> dapi = <span class=k>require</span>('<b>./dealer_api</b>');</div>
<div class="c" style="left:792px;top:309px;">dapi.start(config);</div>
<div class="c" style="left:792px;top:341px;">process.on('<b>uncaughtException</b>', <span class=k>function</span> (err) {</div>
<div class="c" style="left:792px;top:357px;">    console.log("<b>uncaughtException</b>",err.stack);</div>
<div class="c" style="left:792px;top:373px;">});</div>
</body></html>
